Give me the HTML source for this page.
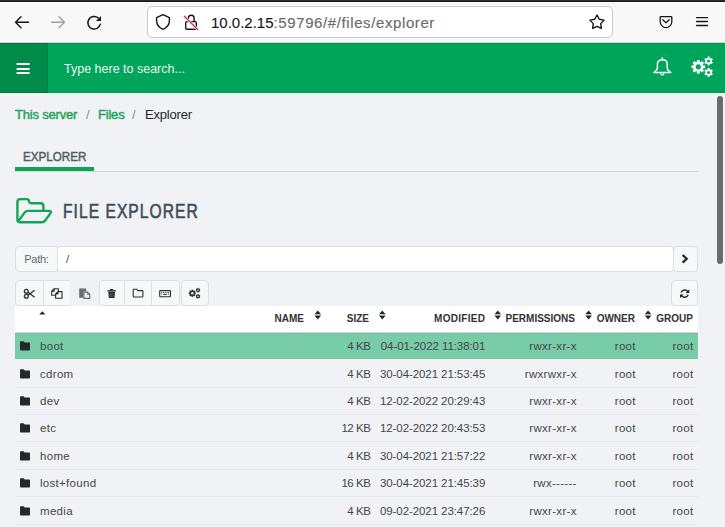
<!DOCTYPE html>
<html><head><meta charset="utf-8">
<style>
*{box-sizing:border-box;margin:0;padding:0}
html,body{width:725px;height:527px;overflow:hidden;background:#f0f2f6;font-family:"Liberation Sans",sans-serif;position:relative}
.abs{position:absolute}
svg{position:absolute;overflow:visible}
#topdark{left:0;top:0;width:725px;height:2px;background:#161616;border-top:1px solid #2f2e31}
#topwhite{left:0;top:2px;width:725px;height:1px;background:#fff}
#toolbar{left:0;top:3px;width:725px;height:38px;background:#f8f8f8}
#tbw{left:0;top:41px;width:725px;height:1px;background:#fdfdfe}
#tbb{left:0;top:42px;width:725px;height:1px;background:#d8cfd4}
#hdw{left:0;top:93px;width:725px;height:1px;background:#fcfbfd}
#urlbar{left:147px;top:6px;width:466px;height:32px;background:#fff;border:1px solid #cacaca;border-radius:5px}
#url{left:211px;top:14px;font-size:15px;line-height:17px;color:#15141a;white-space:nowrap;-webkit-text-stroke:0.1px #15141a}
#url span{-webkit-text-stroke:0.15px #6a6a70}
#url span{color:#6a6a70;letter-spacing:0.6px}
#header{left:0;top:43px;width:725px;height:50px;background:#00a55b;border-top:1px solid #009c54;border-bottom:1px solid #009c54}
#hamb{left:0;top:43px;width:48px;height:50px;background:#008b4a;border:1px solid #007b40;border-left:none}
#search{left:64px;top:62px;font-size:12.5px;line-height:15px;color:#e8f6ee;white-space:nowrap}
.crumb{top:106.5px;font-size:13px;line-height:15px;white-space:nowrap;letter-spacing:-0.2px}
.green{-webkit-text-stroke:0.45px #1fa45a}
.green{color:#1fa45a}
#tabtxt{left:23px;top:150px;font-size:12.3px;line-height:14px;color:#545c64;-webkit-text-stroke:0.45px #545c64;transform-origin:0 0;transform:scaleX(0.945)}
#tabline{left:15px;top:171px;width:683px;height:1px;background:#d5d7db}
#tabul{left:15px;top:167px;width:79px;height:4px;background:#0fa358}
#title{left:63px;top:200px;font-size:19.5px;line-height:22px;color:#434d57;white-space:nowrap;-webkit-text-stroke:0.6px #434d57;letter-spacing:1.3px;transform-origin:0 0;transform:scaleX(0.8)}
#pathlbl{left:15px;top:246px;width:43px;height:26px;background:#f7f8fa;border:1px solid #dcdfe3;border-radius:4px 0 0 4px}
#pathlbl span{position:absolute;left:8.3px;top:6px;font-size:11px;line-height:13px;color:#5d6975;letter-spacing:-0.3px}
#pathin{left:57px;top:246px;width:617px;height:26px;background:#fff;border:1px solid #dcdfe3;border-radius:4px}
#pathin span{position:absolute;left:8px;top:6px;font-size:11.5px;line-height:13px;color:#4a4d52}
#pathbtn{left:673px;top:246px;width:25px;height:26px;background:#f7f8fa;border:1px solid #dcdfe3;border-radius:4px}
.tb{top:280px;height:26px;background:#f7f8fa;border:1px solid #dcdfe3}
#thead{left:15px;top:306px;width:683px;height:27px;background:#fff}
.th{top:313px;font-size:10px;line-height:11px;font-weight:bold;color:#2f3236;white-space:nowrap}
.hl{left:15px;top:333px;width:683px;height:26px;background:#78cca7;border-top:1px solid #70c79f;border-bottom:1px solid #70c8a0}
.hb{left:15px;top:332px;width:683px;height:1px;background:#d6d4d8}
.hw{left:15px;top:359px;width:683px;height:1px;background:#f4f1f4}
.sep{left:15px;width:683px;height:1px;background:#e8e8eb}
.c{font-size:11.5px;line-height:13px;color:#44464a;white-space:nowrap}
.ls{letter-spacing:0.3px}
.r{text-align:right}
#scroll{left:717px;top:96px;width:6px;height:168px;background:#6b6b6b;border-radius:3px}
</style></head><body>
<div class="abs" id="topdark"></div>
<div class="abs" id="topwhite"></div>
<div class="abs" id="toolbar"></div>
<div class="abs" id="tbw"></div>
<div class="abs" id="tbb"></div>
<div class="abs" id="hdw"></div>

<!-- back -->
<svg style="left:0;top:0" width="725" height="42" viewBox="0 0 725 42">
  <g fill="none" stroke="#15141a" stroke-width="1.4" stroke-linecap="round" stroke-linejoin="round">
    <path d="M15.5 22.3H28.5M21 16.8L15.5 22.3L21 27.8"/>
  </g>
  <g fill="none" stroke="#9f9fa3" stroke-width="1.4" stroke-linecap="round" stroke-linejoin="round">
    <path d="M51.5 22.3H64.5M59 16.8L64.5 22.3L59 27.8"/>
  </g>
  <g fill="none" stroke="#15141a" stroke-width="1.5" stroke-linecap="round">
    <path d="M100.3 24.2A6.3 6.3 0 1 1 98.2 17.9"/>
  </g>
  <path d="M101 16V21H96Z" fill="#15141a"/>
</svg>

<div class="abs" id="urlbar"></div>
<svg style="left:0;top:0" width="725" height="42" viewBox="0 0 725 42">
  <!-- shield -->
  <path d="M163 14.7L156.6 17.6V20.5C156.6 24.6 159.5 27.9 163 29.3C166.5 27.9 169.4 24.6 169.4 20.5V17.6Z" fill="none" stroke="#15141a" stroke-width="1.4" stroke-linejoin="round"/>
  <!-- lock -->
  <path d="M188.3 21.6V18.2A2.9 2.9 0 0 1 194.1 18.2V21.6" fill="none" stroke="#15141a" stroke-width="1.4"/>
  <rect x="185.7" y="21.6" width="10.6" height="7.6" rx="1.2" fill="none" stroke="#15141a" stroke-width="1.4"/>
  <path d="M183.2 15.3L198.8 30.6" stroke="#fff" stroke-width="2.6"/>
  <path d="M184.3 16.3L197.6 29.5" stroke="#e0245a" stroke-width="1.3" stroke-linecap="round"/>
  <!-- star -->
  <path d="M597.00 15.00L599.29 19.24L604.04 20.11L600.71 23.61L601.35 28.39L597.00 26.30L592.65 28.39L593.29 23.61L589.96 20.11L594.71 19.24Z" fill="none" stroke="#15141a" stroke-width="1.4" stroke-linejoin="round"/>
  <!-- pocket -->
  <path d="M660.2 17.3C660.2 16.9 660.5 16.6 660.9 16.6H671.1C671.5 16.6 671.8 16.9 671.8 17.3V21.8A5.8 5.8 0 0 1 660.2 21.8Z" fill="none" stroke="#15141a" stroke-width="1.3" stroke-linejoin="round"/>
  <path d="M662.8 19.8L666 22.8L669.2 19.8" fill="none" stroke="#15141a" stroke-width="1.3" stroke-linecap="round" stroke-linejoin="round"/>
  <!-- menu -->
  <path d="M696.5 17.6H707.5M696.5 21.5H707.5M696.5 25.5H707.5" stroke="#15141a" stroke-width="1.3" stroke-linecap="round"/>
</svg>
<div class="abs" id="url">10.0.2.15<span>:59796/#/files/explorer</span></div>

<div class="abs" id="header"></div>
<div class="abs" id="hamb"></div>
<svg style="left:0;top:42px" width="725" height="51" viewBox="0 42 725 51">
  <path d="M16.6 63.1H29.6V65.1H16.6ZM16.6 67.9H29.6V69.9H16.6ZM16.6 72H29.6V74H16.6Z" fill="#fff"/>
  <!-- bell -->
  <path d="M657.4 68V63.8C657.4 61.3 659.5 59.7 662.3 59.7C665.1 59.7 667.2 61.3 667.2 63.8V68C667.2 70.3 669.3 71.4 670.7 72.6H653.9C655.3 71.4 657.4 70.3 657.4 68Z" fill="none" stroke="#fff" stroke-width="1.5" stroke-linejoin="round"/>
  <path d="M662.3 59.7V57.8" stroke="#fff" stroke-width="1.4" stroke-linecap="round"/>
  <path d="M660.6 73.3A1.7 1.7 0 0 0 664 73.3" fill="none" stroke="#fff" stroke-width="1.1"/>
  <!-- cogs -->
  <g fill="#fff">
    <g transform="translate(698.3 66.8)">
      <circle r="5" />
      <rect x="-1.4" y="-6.8" width="2.8" height="13.6"/>
      <rect x="-1.4" y="-6.8" width="2.8" height="13.6" transform="rotate(45)"/>
      <rect x="-1.4" y="-6.8" width="2.8" height="13.6" transform="rotate(90)"/>
      <rect x="-1.4" y="-6.8" width="2.8" height="13.6" transform="rotate(135)"/>
    </g>
    <g transform="translate(708.6 61)">
      <circle r="3.1"/>
      <rect x="-1" y="-4.4" width="2" height="8.8"/>
      <rect x="-1" y="-4.4" width="2" height="8.8" transform="rotate(60)"/>
      <rect x="-1" y="-4.4" width="2" height="8.8" transform="rotate(120)"/>
    </g>
    <g transform="translate(708.6 72.4)">
      <circle r="3.1"/>
      <rect x="-1" y="-4.4" width="2" height="8.8"/>
      <rect x="-1" y="-4.4" width="2" height="8.8" transform="rotate(60)"/>
      <rect x="-1" y="-4.4" width="2" height="8.8" transform="rotate(120)"/>
    </g>
  </g>
  <g fill="#00a55b">
    <circle cx="698.3" cy="66.8" r="2.6"/>
    <circle cx="708.6" cy="61" r="1.5"/>
    <circle cx="708.6" cy="72.4" r="1.5"/>
  </g>
</svg>
<div class="abs" id="search">Type here to search...</div>

<div class="abs crumb green" style="left:15px">This server</div>
<div class="abs crumb" style="left:86px;color:#8a8f95">/</div>
<div class="abs crumb green" style="left:98px">Files</div>
<div class="abs crumb" style="left:132px;color:#8a8f95">/</div>
<div class="abs crumb" style="left:145px;color:#23262a">Explorer</div>

<div class="abs" id="tabtxt">EXPLORER</div>
<div class="abs" id="tabline"></div>
<div class="abs" id="tabul"></div>

<svg style="left:0;top:190px" width="60" height="40" viewBox="0 190 60 40">
  <path d="M43.4 210.2V206Q43.4 203.2 40.6 203.2H31.4Q29.2 203.2 29 201.2Q28.8 199.1 26.6 199.1H20.3Q17.4 199.1 17.4 202V219.4Q17.4 222.3 20.3 222.3H41.9Q43.8 222.3 45 220.7L50.4 213.4Q51.9 210.9 49 210.9H28Q25.9 210.9 24.6 212.6L18.2 221.4" fill="none" stroke="#13a557" stroke-width="2.4" stroke-linejoin="round" stroke-linecap="round"/>
</svg>
<div class="abs" id="title">FILE EXPLORER</div>

<div class="abs" id="pathlbl"><span>Path:</span></div>
<div class="abs" id="pathin"><span>/</span></div>
<div class="abs" id="pathbtn"></div>
<svg style="left:673px;top:246px" width="25" height="26" viewBox="673 246 25 26">
  <path d="M682.6 255L686.7 258.8L682.6 262.6" fill="none" stroke="#23262a" stroke-width="2.2" stroke-linejoin="miter"/>
</svg>

<!-- toolbar buttons -->
<div class="abs tb" style="left:15px;width:29px;border-radius:4px 0 0 4px"></div>
<div class="abs tb" style="left:43px;width:28px;border-radius:0"></div>
<div class="abs tb" style="left:70px;width:29px;border:none;background:#eff1f4;border-radius:0 4px 4px 0"></div>
<div class="abs tb" style="left:99px;width:26px;border-radius:4px 0 0 4px"></div>
<div class="abs tb" style="left:124px;width:28px;border-radius:0"></div>
<div class="abs tb" style="left:151px;width:29px;border-radius:0 4px 4px 0"></div>
<div class="abs tb" style="left:181px;width:28px;border-radius:4px"></div>
<div class="abs tb" style="left:671px;width:27px;border-radius:4px"></div>

<svg style="left:0;top:280px" width="725" height="26" viewBox="0 280 725 26">
  <!-- scissors -->
  <g fill="none" stroke="#2a2d31" stroke-width="1.3">
    <circle cx="26.3" cy="291.3" r="1.9"/>
    <circle cx="26.3" cy="296.2" r="1.9"/>
    <path d="M28 292.3L34.6 297.3M28 295.2L34.6 290.2"/>
  </g>
  <!-- copy -->
  <g fill="#f7f8fa" stroke="#2a2d31" stroke-width="1.1" stroke-linejoin="round">
    <path d="M54.2 288.7H58.4V291.4M55.4 295.2H51.7V291.2L54.2 288.7V291.2H51.7"/>
    <path d="M57.9 291.6H62V298.3H55.6V294L57.9 291.6V294H55.6Z"/>
  </g>
  <!-- paste (disabled) -->
  <path d="M79.2 288.6H86.2V291.5H83.3V297.7H79.2Z" fill="#676b71"/>
  <path d="M80.5 288.6H84.9V289.4H80.5Z" fill="#8d9196"/>
  <path d="M83.9 292.1H87.6L89.7 294.2V298.4H83.9Z" fill="#eff1f4" stroke="#676b71" stroke-width="1.1" stroke-linejoin="round"/>
  <path d="M87.4 292.2V294.4H89.6" fill="none" stroke="#676b71" stroke-width="0.9"/>
  <!-- trash -->
  <g fill="#2a2d31">
    <rect x="107.4" y="290.2" width="8.4" height="1.3"/>
    <rect x="110" y="289" width="3.2" height="1.4"/>
    <path d="M108.3 291.8H115L114.5 298H108.8Z"/>
  </g>
  <path d="M110.3 293V297M111.6 293V297M112.9 293V297" stroke="#6b6f75" stroke-width="0.5"/>
  <!-- folder-o -->
  <path d="M133.2 290.1C133.2 289.6 133.5 289.3 134 289.3H136.8L137.9 290.6H142.2C142.6 290.6 142.9 290.9 142.9 291.3V296.3C142.9 296.7 142.6 297 142.2 297H134C133.5 297 133.2 296.7 133.2 296.3Z" fill="none" stroke="#2a2d31" stroke-width="1.1"/>
  <!-- keyboard -->
  <rect x="159.7" y="290.6" width="10.8" height="6.1" rx="0.7" fill="none" stroke="#2a2d31" stroke-width="1.1"/>
  <path d="M161.2 292.5H169" stroke="#2a2d31" stroke-width="0.9" stroke-dasharray="1 0.75"/>
  <path d="M161.2 294.1H162.2M168 294.1H169M163.2 294.5H167" stroke="#2a2d31" stroke-width="0.9"/>
  <!-- cogs small -->
  <g fill="#2a2d31">
    <g transform="translate(192.3 293.3)">
      <circle r="2.6"/>
      <rect x="-0.8" y="-3.6" width="1.6" height="7.2"/>
      <rect x="-0.8" y="-3.6" width="1.6" height="7.2" transform="rotate(45)"/>
      <rect x="-0.8" y="-3.6" width="1.6" height="7.2" transform="rotate(90)"/>
      <rect x="-0.8" y="-3.6" width="1.6" height="7.2" transform="rotate(135)"/>
    </g>
    <g transform="translate(198 290.2)">
      <circle r="1.7"/>
      <rect x="-0.55" y="-2.3" width="1.1" height="4.6"/>
      <rect x="-0.55" y="-2.3" width="1.1" height="4.6" transform="rotate(60)"/>
      <rect x="-0.55" y="-2.3" width="1.1" height="4.6" transform="rotate(120)"/>
    </g>
    <g transform="translate(198 296.3)">
      <circle r="1.7"/>
      <rect x="-0.55" y="-2.3" width="1.1" height="4.6"/>
      <rect x="-0.55" y="-2.3" width="1.1" height="4.6" transform="rotate(60)"/>
      <rect x="-0.55" y="-2.3" width="1.1" height="4.6" transform="rotate(120)"/>
    </g>
  </g>
  <g fill="#f7f8fa">
    <circle cx="192.3" cy="293.3" r="1.2"/>
    <circle cx="198" cy="290.2" r="0.75"/>
    <circle cx="198" cy="296.3" r="0.75"/>
  </g>
  <!-- refresh -->
  <g fill="none" stroke="#23262a" stroke-width="1.5">
    <path d="M681.1 292.6A3.9 3.9 0 0 1 688 291.8"/>
    <path d="M688.2 294.8A3.9 3.9 0 0 1 681.3 295.6"/>
  </g>
  <path d="M689.3 289.2V292.9H685.6Z" fill="#23262a"/>
  <path d="M680 298.1V294.4H683.7Z" fill="#23262a"/>
</svg>

<div class="abs" id="thead"></div>
<svg style="left:0;top:306px" width="725" height="27" viewBox="0 306 725 27">
  <path d="M39.2 314.6L42.3 311.3L45.4 314.6Z" fill="#23262a"/>
  <g fill="#23262a">
<path d="M314.5 314.3L317.8 310.5L321.1 314.3ZM314.5 315.6L317.8 319.4L321.1 315.6Z"/>
<path d="M379.0 314.3L382.3 310.5L385.6 314.3ZM379.0 315.6L382.3 319.4L385.6 315.6Z"/>
<path d="M494.5 314.3L497.8 310.5L501.1 314.3ZM494.5 315.6L497.8 319.4L501.1 315.6Z"/>
<path d="M585.3 314.3L588.6 310.5L591.9 314.3ZM585.3 315.6L588.6 319.4L591.9 315.6Z"/>
<path d="M644.8 314.3L648.1 310.5L651.4 314.3ZM644.8 315.6L648.1 319.4L651.4 315.6Z"/>
</g>
</svg>
<div class="abs th r" style="right:421px">NAME</div>
<div class="abs th r" style="right:356px">SIZE</div>
<div class="abs th r" style="right:239.7px;letter-spacing:0.3px">MODIFIED</div>
<div class="abs th r" style="right:150px">PERMISSIONS</div>
<div class="abs th r" style="right:90px">OWNER</div>
<div class="abs th r" style="right:32px">GROUP</div>

<div class="abs hl"></div>
<div class="abs hb"></div>
<div class="abs hw"></div>
<div id="rows">
<svg style="left:19px;top:341.0px" width="12" height="10" viewBox="0 0 12 10"><path d="M1 1.2C1 0.6 1.4 0.2 2 0.2H4.6L5.8 1.6H10C10.6 1.6 11 2 11 2.6V8.4C11 9 10.6 9.4 10 9.4H2C1.4 9.4 1 9 1 8.4Z" fill="#24272b"/></svg>
<div class="abs c ls" style="left:40px;top:339.7px">boot</div>
<div class="abs c r" style="right:354.5px;top:339.7px;letter-spacing:-0.45px">4 KB</div>
<div class="abs c r" style="right:239.8px;top:339.7px;letter-spacing:-0.08px">04-01-2022 11:38:01</div>
<div class="abs c r ls" style="right:148.3px;top:339.7px">rwxr-xr-x</div>
<div class="abs c r ls" style="right:89.2px;top:339.7px">root</div>
<div class="abs c r ls" style="right:31.5px;top:339.7px">root</div>
<div class="abs sep" style="top:387px"></div>
<svg style="left:19px;top:369.0px" width="12" height="10" viewBox="0 0 12 10"><path d="M1 1.2C1 0.6 1.4 0.2 2 0.2H4.6L5.8 1.6H10C10.6 1.6 11 2 11 2.6V8.4C11 9 10.6 9.4 10 9.4H2C1.4 9.4 1 9 1 8.4Z" fill="#24272b"/></svg>
<div class="abs c ls" style="left:40px;top:367.7px">cdrom</div>
<div class="abs c r" style="right:354.5px;top:367.7px;letter-spacing:-0.45px">4 KB</div>
<div class="abs c r" style="right:239.8px;top:367.7px;letter-spacing:-0.08px">30-04-2021 21:53:45</div>
<div class="abs c r ls" style="right:148.3px;top:367.7px">rwxrwxr-x</div>
<div class="abs c r ls" style="right:89.2px;top:367.7px">root</div>
<div class="abs c r ls" style="right:31.5px;top:367.7px">root</div>
<div class="abs sep" style="top:414px"></div>
<svg style="left:19px;top:396.0px" width="12" height="10" viewBox="0 0 12 10"><path d="M1 1.2C1 0.6 1.4 0.2 2 0.2H4.6L5.8 1.6H10C10.6 1.6 11 2 11 2.6V8.4C11 9 10.6 9.4 10 9.4H2C1.4 9.4 1 9 1 8.4Z" fill="#24272b"/></svg>
<div class="abs c ls" style="left:40px;top:394.7px">dev</div>
<div class="abs c r" style="right:354.5px;top:394.7px;letter-spacing:-0.45px">4 KB</div>
<div class="abs c r" style="right:239.8px;top:394.7px;letter-spacing:-0.08px">12-02-2022 20:29:43</div>
<div class="abs c r ls" style="right:148.3px;top:394.7px">rwxr-xr-x</div>
<div class="abs c r ls" style="right:89.2px;top:394.7px">root</div>
<div class="abs c r ls" style="right:31.5px;top:394.7px">root</div>
<div class="abs sep" style="top:441px"></div>
<svg style="left:19px;top:423.0px" width="12" height="10" viewBox="0 0 12 10"><path d="M1 1.2C1 0.6 1.4 0.2 2 0.2H4.6L5.8 1.6H10C10.6 1.6 11 2 11 2.6V8.4C11 9 10.6 9.4 10 9.4H2C1.4 9.4 1 9 1 8.4Z" fill="#24272b"/></svg>
<div class="abs c ls" style="left:40px;top:421.7px">etc</div>
<div class="abs c r" style="right:354.5px;top:421.7px;letter-spacing:-0.45px">12 KB</div>
<div class="abs c r" style="right:239.8px;top:421.7px;letter-spacing:-0.08px">12-02-2022 20:43:53</div>
<div class="abs c r ls" style="right:148.3px;top:421.7px">rwxr-xr-x</div>
<div class="abs c r ls" style="right:89.2px;top:421.7px">root</div>
<div class="abs c r ls" style="right:31.5px;top:421.7px">root</div>
<div class="abs sep" style="top:469px"></div>
<svg style="left:19px;top:451.0px" width="12" height="10" viewBox="0 0 12 10"><path d="M1 1.2C1 0.6 1.4 0.2 2 0.2H4.6L5.8 1.6H10C10.6 1.6 11 2 11 2.6V8.4C11 9 10.6 9.4 10 9.4H2C1.4 9.4 1 9 1 8.4Z" fill="#24272b"/></svg>
<div class="abs c ls" style="left:40px;top:449.7px">home</div>
<div class="abs c r" style="right:354.5px;top:449.7px;letter-spacing:-0.45px">4 KB</div>
<div class="abs c r" style="right:239.8px;top:449.7px;letter-spacing:-0.08px">30-04-2021 21:57:22</div>
<div class="abs c r ls" style="right:148.3px;top:449.7px">rwxr-xr-x</div>
<div class="abs c r ls" style="right:89.2px;top:449.7px">root</div>
<div class="abs c r ls" style="right:31.5px;top:449.7px">root</div>
<div class="abs sep" style="top:496px"></div>
<svg style="left:19px;top:478.0px" width="12" height="10" viewBox="0 0 12 10"><path d="M1 1.2C1 0.6 1.4 0.2 2 0.2H4.6L5.8 1.6H10C10.6 1.6 11 2 11 2.6V8.4C11 9 10.6 9.4 10 9.4H2C1.4 9.4 1 9 1 8.4Z" fill="#24272b"/></svg>
<div class="abs c ls" style="left:40px;top:476.7px">lost+found</div>
<div class="abs c r" style="right:354.5px;top:476.7px;letter-spacing:-0.45px">16 KB</div>
<div class="abs c r" style="right:239.8px;top:476.7px;letter-spacing:-0.08px">30-04-2021 21:45:39</div>
<div class="abs c r ls" style="right:148.3px;top:476.7px">rwx------</div>
<div class="abs c r ls" style="right:89.2px;top:476.7px">root</div>
<div class="abs c r ls" style="right:31.5px;top:476.7px">root</div>
<div class="abs sep" style="top:524px"></div>
<svg style="left:19px;top:506.0px" width="12" height="10" viewBox="0 0 12 10"><path d="M1 1.2C1 0.6 1.4 0.2 2 0.2H4.6L5.8 1.6H10C10.6 1.6 11 2 11 2.6V8.4C11 9 10.6 9.4 10 9.4H2C1.4 9.4 1 9 1 8.4Z" fill="#24272b"/></svg>
<div class="abs c ls" style="left:40px;top:504.7px">media</div>
<div class="abs c r" style="right:354.5px;top:504.7px;letter-spacing:-0.45px">4 KB</div>
<div class="abs c r" style="right:239.8px;top:504.7px;letter-spacing:-0.08px">09-02-2021 23:47:26</div>
<div class="abs c r ls" style="right:148.3px;top:504.7px">rwxr-xr-x</div>
<div class="abs c r ls" style="right:89.2px;top:504.7px">root</div>
<div class="abs c r ls" style="right:31.5px;top:504.7px">root</div>
</div>

<div class="abs" id="scroll"></div>
</body></html>
